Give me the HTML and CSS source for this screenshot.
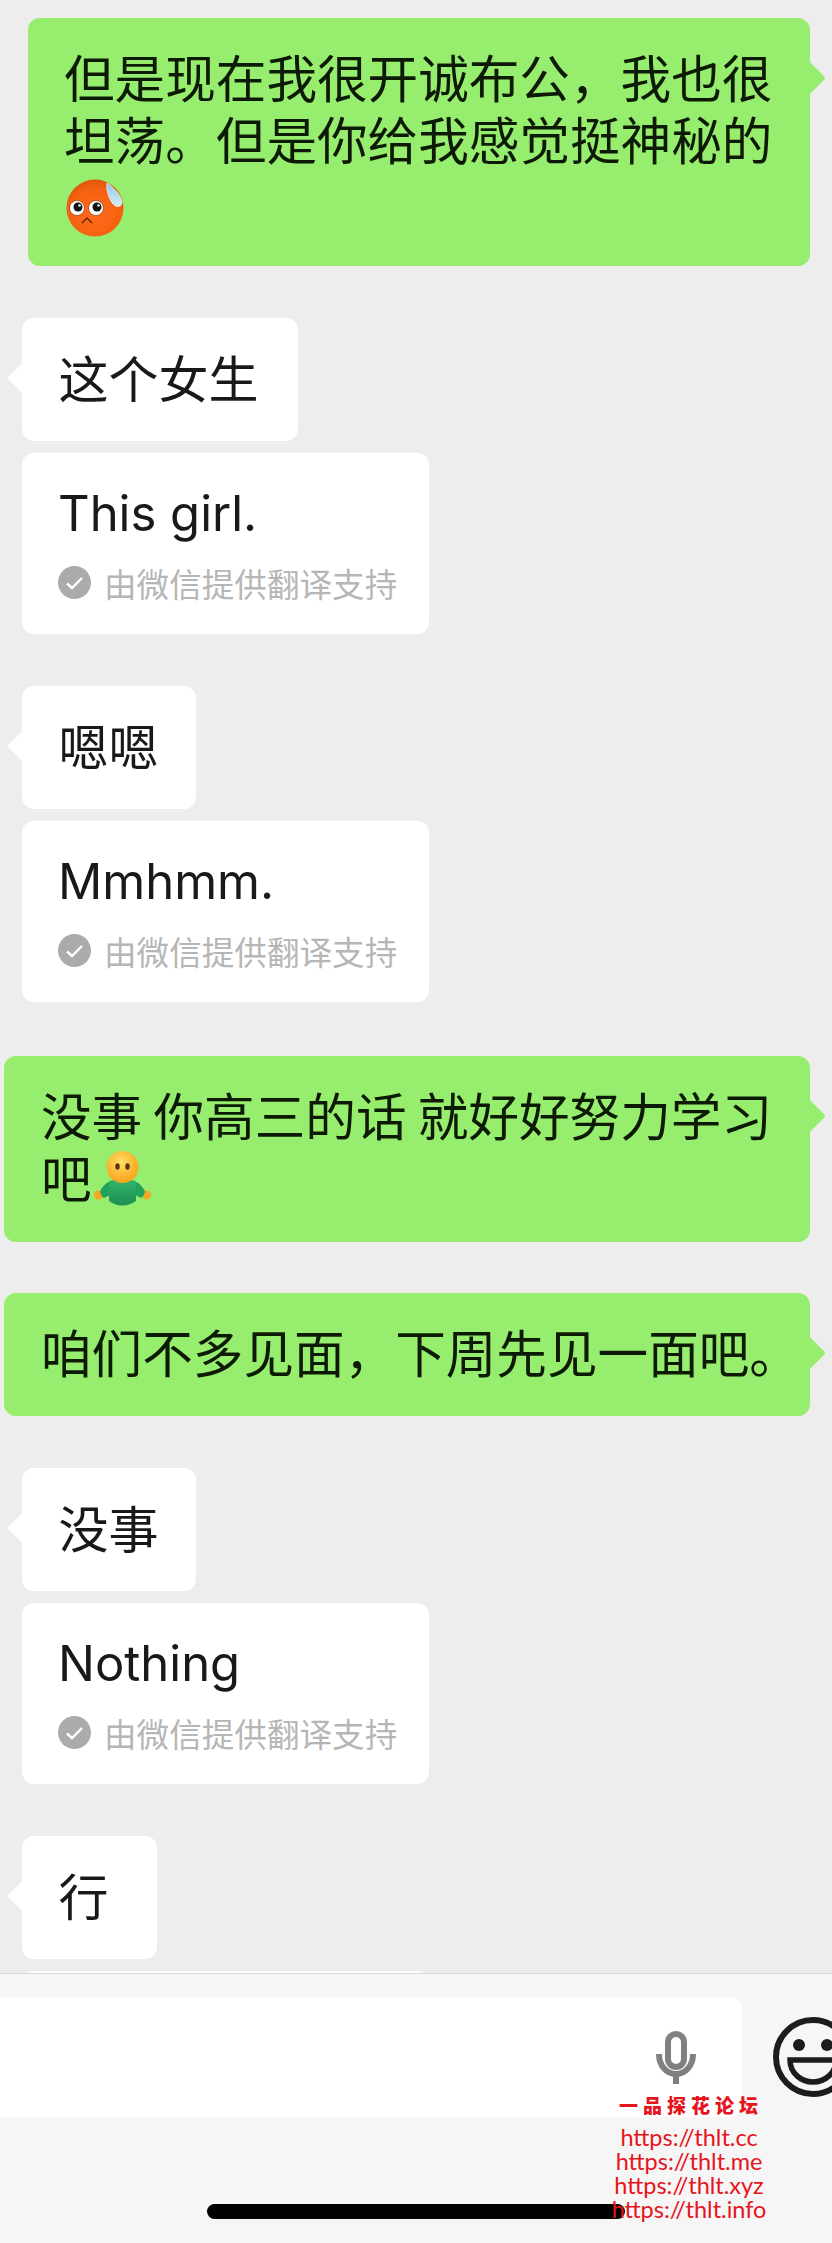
FILE: index.html
```html
<!DOCTYPE html>
<html lang="zh-CN">
	<head>
		<meta charset="utf-8">
		<title>聊天</title>
		<link rel="stylesheet" href="styles.css">
	</head>
	<body>
		<main class="chat">
			<div class="bubble mine first tall">但是现在我很开诚布公，我也很<br>坦荡。但是你给我感觉挺神秘的<br>
				<svg class="emoji" viewBox="0 0 58 58">
					<defs>
						<radialGradient id="flushed" cx="50%" cy="60%" r="62%">
							<stop offset="0" stop-color="#ff6a1c"/>
							<stop offset="0.75" stop-color="#f4620f"/>
							<stop offset="1" stop-color="#d9520a"/>
						</radialGradient>
						<linearGradient id="drop" x1="0" y1="0" x2="0" y2="1">
							<stop offset="0" stop-color="#8ec6ea"/>
							<stop offset="1" stop-color="#d8eef8"/>
						</linearGradient>
					</defs>
					<circle cx="29" cy="29" r="28.5" fill="url(#flushed)"/>
					<path d="M41 4 C46 7 55 16 56 23 C56 28 50 29 47 25 C43 20 40 11 41 4Z" fill="url(#drop)" stroke="#e8f4fa" stroke-width="0.8"/>
					<circle cx="11" cy="29" r="7.5" fill="#fff" stroke="#7a2c05" stroke-width="0.6"/>
					<circle cx="12" cy="28" r="4.5" fill="#111"/>
					<circle cx="13.5" cy="26.5" r="1.3" fill="#fff"/>
					<circle cx="30" cy="29" r="7.5" fill="#fff" stroke="#7a2c05" stroke-width="0.6"/>
					<circle cx="31" cy="28" r="4.5" fill="#111"/>
					<circle cx="32.5" cy="26.5" r="1.3" fill="#fff"/>
					<path d="M16 44 L21 39 L26 44" fill="none" stroke="#5a2206" stroke-width="1.4"/>
				</svg>
			</div>

			<div class="group">
				<div class="bubble theirs cn4">这个女生</div>
				<div class="bubble translation">
					<div class="translated">This girl.</div>
					<div class="note">
						<svg class="check" viewBox="0 0 33 33"><circle cx="16.5" cy="16.5" r="16.5" fill="#ababab"/><path d="M9 17.5 L14 22 L24 12" fill="none" stroke="#fff" stroke-width="2.4"/></svg>
						<span>由微信提供翻译支持</span>
					</div>
				</div>
			</div>

			<div class="group">
				<div class="bubble theirs cn2">嗯嗯</div>
				<div class="bubble translation">
					<div class="translated">Mmhmm.</div>
					<div class="note">
						<svg class="check" viewBox="0 0 33 33"><circle cx="16.5" cy="16.5" r="16.5" fill="#ababab"/><path d="M9 17.5 L14 22 L24 12" fill="none" stroke="#fff" stroke-width="2.4"/></svg>
						<span>由微信提供翻译支持</span>
					</div>
				</div>
			</div>

			<div class="bubble mine wide tall nudge-down">没事 你高三的话 就好好努力学习<br>吧<svg class="emoji shrug" viewBox="0 0 58 56">
					<defs>
						<radialGradient id="face" cx="45%" cy="35%" r="60%">
							<stop offset="0" stop-color="#ffe066"/>
							<stop offset="1" stop-color="#f9a51f"/>
						</radialGradient>
						<linearGradient id="shirt" x1="0" y1="0" x2="0" y2="1">
							<stop offset="0" stop-color="#35b56c"/>
							<stop offset="1" stop-color="#1c8f52"/>
						</linearGradient>
					</defs>
					<circle cx="4.5" cy="44" r="4.5" fill="#f7a823"/>
					<circle cx="52.5" cy="44" r="4.5" fill="#f7a823"/>
					<path d="M6 41 C8 35 13 31 18 30 L20 42 L10 47 C8 46 7 44 6 41Z M51 41 C49 35 44 31 39 30 L37 42 L47 47 C49 46 50 44 51 41Z" fill="#22a05d"/>
					<path d="M15 30 Q28 26 42 30 L42 50 Q28 59 15 50Z" fill="url(#shirt)"/>
					<circle cx="28.5" cy="16" r="16" fill="url(#face)"/>
					<ellipse cx="23.5" cy="15.5" rx="2.2" ry="3.2" fill="#5a3310"/>
					<ellipse cx="33.5" cy="15.5" rx="2.2" ry="3.2" fill="#5a3310"/>
				</svg>
			</div>

			<div class="bubble mine wide nudge-up">咱们不多见面，下周先见一面吧。</div>

			<div class="group">
				<div class="bubble theirs cn2">没事</div>
				<div class="bubble translation">
					<div class="translated">Nothing</div>
					<div class="note">
						<svg class="check" viewBox="0 0 33 33"><circle cx="16.5" cy="16.5" r="16.5" fill="#ababab"/><path d="M9 17.5 L14 22 L24 12" fill="none" stroke="#fff" stroke-width="2.4"/></svg>
						<span>由微信提供翻译支持</span>
					</div>
				</div>
			</div>

			<div class="group">
				<div class="bubble theirs cn1">行</div>
				<div class="bubble translation">
					<div class="translated">&nbsp;</div>
				</div>
			</div>
		</main>

		<footer class="bar">
			<div class="input-row">
				<div class="input">
					<svg class="mic" viewBox="0 0 40 53">
						<rect x="12" y="3" width="16" height="33" rx="8" fill="none" stroke="#808080" stroke-width="6"/>
						<path d="M3 23 C3 34 10 43 20 43 C30 43 37 34 37 23" fill="none" stroke="#808080" stroke-width="6"/>
						<rect x="17" y="42" width="6" height="11" fill="#808080"/>
					</svg>
				</div>
				<svg class="smile" viewBox="0 0 80 80">
					<circle cx="40" cy="40" r="37" fill="none" stroke="#1c1c1c" stroke-width="6"/>
					<circle cx="26" cy="28" r="6" fill="#1c1c1c"/>
					<circle cx="54" cy="28" r="6" fill="#1c1c1c"/>
					<path d="M17 43 H63 C63 56 52 65 40 65 C28 65 17 56 17 43Z" fill="none" stroke="#1c1c1c" stroke-width="5.5"/>
				</svg>
			</div>
			<div class="home"></div>
		</footer>

		<div class="watermark">
			<div class="mark-title">一品探花论坛</div>
			<div>https://thlt.cc</div>
			<div>https://thlt.me</div>
			<div>https://thlt.xyz</div>
			<div>https://thlt.info</div>
		</div>
	</body>
</html>
```
FILE: styles.css
```css
html, body { margin: 0; padding: 0; }

body {
	position: relative;
	width: 832px;
	height: 2243px;
	overflow: hidden;
	display: flex;
	flex-direction: column;
	background: #ededed;
	color: #191919;
	font: 50px/62px "Noto Sans CJK SC", "Liberation Sans", sans-serif;
}

.chat {
	flex: 1;
	min-height: 0;
	overflow: hidden;
	padding-top: 18px;
	display: flex;
	flex-direction: column;
	gap: 52px;
}

.group { display: flex; flex-direction: column; gap: 12px; }

.bubble {
	position: relative;
	box-sizing: border-box;
	padding: 27px 0 34px;
	border-radius: 12px;
	white-space: nowrap;
	flex: none;
}
.bubble.tall { padding-bottom: 35px; }
.nudge-down { margin-top: 2px; }
.nudge-up { margin-top: -1px; }

.bubble.mine {
	background: #97ed6d;
	color: #0c1a06;
	font-size: 50.6px;
	margin-right: 22px;
}
.bubble.mine::after {
	content: "";
	position: absolute;
	right: -11px;
	top: 48px;
	width: 24px;
	height: 24px;
	border-radius: 3px;
	background: #97ed6d;
	transform: rotate(45deg);
}
.bubble.first { margin-left: 28px; padding-left: 36px; }
.bubble.wide { margin-left: 4px; padding-left: 37px; }

.bubble.theirs { background: #fff; margin-left: 22px; padding-left: 36.5px; }
.bubble.theirs::before {
	content: "";
	position: absolute;
	left: -10px;
	top: 48px;
	width: 24px;
	height: 24px;
	border-radius: 3px;
	background: #fff;
	transform: rotate(45deg);
}
.cn4 { width: 276px; }
.cn2 { width: 174px; }
.cn1 { width: 135px; }

.bubble.translation {
	background: #fff;
	margin-left: 22px;
	width: 407px;
	padding: 30px 0 35px 36px;
}
.translated { font-family: "Inter", "Liberation Sans", sans-serif; font-size: 49px; }
.note {
	display: flex;
	align-items: center;
	gap: 13px;
	margin-top: 21px;
	height: 33px;
	font-size: 32.6px;
	line-height: 33px;
	color: #b6b6b6;
}
.check { width: 33px; height: 33px; flex: none; }

.emoji { width: 58px; height: 58px; vertical-align: middle; margin: -12px 0 -12px 2px; }
.emoji.shrug { height: 56px; margin: -14px 0 -4px 2px; }

.bar {
	height: 270px;
	flex: none;
	box-sizing: border-box;
	background: #f6f6f6;
	border-top: 1px solid #d8d8d8;
	padding-top: 23px;
}
.input-row { display: flex; align-items: center; height: 120px; }
.input {
	width: 742px;
	height: 120px;
	flex: none;
	background: #fff;
	border-radius: 0 12px 12px 0;
	display: flex;
	align-items: center;
	justify-content: flex-end;
	padding-right: 46px;
	box-sizing: border-box;
}
.mic { width: 40px; height: 53px; }
.smile { width: 80px; height: 80px; flex: none; margin-left: 31px; }
.home {
	width: 418px;
	height: 15px;
	margin: 87px 0 0 207px;
	background: #000;
	border-radius: 8px;
}

.watermark {
	position: absolute;
	left: 600px;
	top: 2092px;
	width: 178px;
	text-align: center;
	color: #e5141d;
	font: 23.5px/24px "Lato", "Noto Sans", sans-serif;
}
.mark-title {
	font: 900 19px/26px "Noto Sans CJK SC", sans-serif;
	letter-spacing: 5px;
	margin: 0 0 7px 4px;
}
```
